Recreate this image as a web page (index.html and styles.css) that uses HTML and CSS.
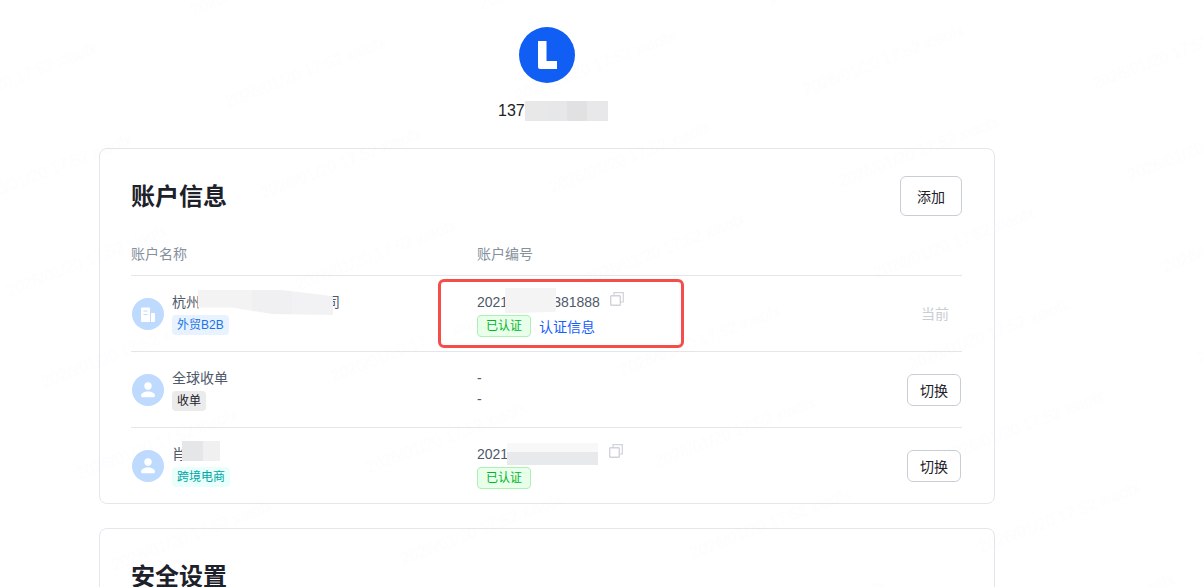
FILE: index.html
```html
<!DOCTYPE html>
<html lang="zh-CN">
<head>
<meta charset="utf-8">
<title>账户信息</title>
<link rel="stylesheet" href="styles.css">
</head>
<body>
<main class="page">
  <header class="profile">
    <div class="avatar">
      <svg width="56" height="56" viewBox="0 0 56 56"><circle cx="28" cy="28" r="28" fill="#115ef5"/><path d="M19 14h8.500v20H38v8H21a2 2 0 0 1-2-2z" fill="#fff"/></svg>
    </div>
    <div class="phone">137<span class="mask mask-phone"></span></div>
  </header>

  <section class="card">
    <div class="card-head">
      <h2>账户信息</h2>
      <button class="btn btn-large">添加</button>
    </div>
    <div class="row row-head">
      <div class="col-name">账户名称</div>
      <div class="col-no">账户编号</div>
    </div>
    <div class="row">
      <div class="col-name account">
        <svg class="icon" viewBox="0 0 32 32"><circle cx="16" cy="16" r="16" fill="#bedaff"/><path d="M9 10.500a1 1 0 0 1 1-1h7a1 1 0 0 1 1 1V24H10a1 1 0 0 1-1-1z" fill="#fff"/><path d="M19 15h3a1 1 0 0 1 1 1v7a1 1 0 0 1-1 1h-3z" fill="#fff"/><path d="M11.500 13h4M11.500 16.500h4" stroke="#bedaff" stroke-width="1.200"/></svg>
        <div class="meta">
          <div class="name">杭州<span class="mask mask-company"></span>司</div>
          <span class="tag tag-blue">外贸B2B</span>
        </div>
      </div>
      <div class="col-no">
        <div class="number">2021<span class="mask mask-no1"></span>381888<svg class="copy" viewBox="0 0 14 14"><path d="M4 3V.7h9.300V10H11" fill="none" stroke="#d0d3d9" stroke-width="1.200"/><rect x=".7" y="3.700" width="9.600" height="9.600" rx=".8" fill="none" stroke="#d0d3d9" stroke-width="1.400"/></svg></div>
        <div class="status"><span class="tag tag-green">已认证</span><a class="link">认证信息</a></div>
      </div>
      <div class="col-action"><span class="current">当前</span></div>
    </div>
    <div class="row">
      <div class="col-name account">
        <svg class="icon" viewBox="0 0 32 32"><circle cx="16" cy="16" r="16" fill="#bedaff"/><circle cx="16" cy="12" r="3.700" fill="#fff"/><path d="M9 21.800c0-2.700 3.200-4.300 7-4.300s7 1.600 7 4.300c0 .9-.6 1.400-1.400 1.400H10.400c-.8 0-1.400-.5-1.400-1.400z" fill="#fff"/></svg>
        <div class="meta">
          <div class="name">全球收单</div>
          <span class="tag tag-gray">收单</span>
        </div>
      </div>
      <div class="col-no">
        <div class="number">-</div>
        <div class="status dash">-</div>
      </div>
      <div class="col-action"><button class="btn">切换</button></div>
    </div>
    <div class="row row-last">
      <div class="col-name account">
        <svg class="icon" viewBox="0 0 32 32"><circle cx="16" cy="16" r="16" fill="#bedaff"/><circle cx="16" cy="12" r="3.700" fill="#fff"/><path d="M9 21.800c0-2.700 3.200-4.300 7-4.300s7 1.600 7 4.300c0 .9-.6 1.400-1.400 1.400H10.400c-.8 0-1.400-.5-1.400-1.400z" fill="#fff"/></svg>
        <div class="meta">
          <div class="name">肖<span class="mask mask-person"></span></div>
          <span class="tag tag-cyan">跨境电商</span>
        </div>
      </div>
      <div class="col-no">
        <div class="number">2021<span class="mask mask-no2"></span><svg class="copy copy-near" viewBox="0 0 14 14"><path d="M4 3V.7h9.300V10H11" fill="none" stroke="#d0d3d9" stroke-width="1.200"/><rect x=".7" y="3.700" width="9.600" height="9.600" rx=".8" fill="none" stroke="#d0d3d9" stroke-width="1.400"/></svg></div>
        <div class="status"><span class="tag tag-green">已认证</span></div>
      </div>
      <div class="col-action"><button class="btn">切换</button></div>
    </div>
  </section>

  <section class="card card-next">
    <div class="card-head"><h2>安全设置</h2></div>
  </section>
</main>

<div class="highlight"></div>

<svg class="watermark" width="1203" height="587" aria-hidden="true">
  <defs>
    <pattern id="wm" width="272" height="98" patternUnits="userSpaceOnUse" patternTransform="translate(210 61) rotate(-21)">
      <text x="0" y="50" class="wm-text">2026/01/20 17:52 xiaofx</text>
    </pattern>
  </defs>
  <rect width="1203" height="587" fill="url(#wm)"/>
</svg>
</body>
</html>
```
FILE: styles.css
```css
* { box-sizing: border-box; }
html, body { margin: 0; height: 587px; overflow: hidden; background: #fff; }
body {
  font-family: "Liberation Sans", "Noto Sans CJK SC", sans-serif;
  font-size: 14px;
  color: #4e5969;
  position: relative;
}
.page { width: 896px; margin-left: 99px; padding-top: 27px; }

.profile { display: flex; flex-direction: column; align-items: center; }
.avatar { width: 56px; height: 56px; }
.avatar svg { display: block; }
.phone {
  margin-top: 17px;
  height: 22px;
  line-height: 22px;
  font-size: 16px;
  color: #1d2129;
  display: flex;
  align-items: center;
  align-self: flex-start;
  margin-left: 399px;
}

.mask { display: inline-block; flex: none; }
.mask-phone {
  width: 83px; height: 20px;
  background: linear-gradient(90deg, #e8e8e8 0 26%, #e6e7e9 26% 50%, #e1e1e1 50% 75%, #e8e8ea 75%);
}

.card {
  margin-top: 26px;
  border: 1px solid #e5e6eb;
  border-radius: 8px;
  padding: 27px 32px 0 31px;
  background: #fff;
}
.card-next { margin-top: 24px; height: 70px; }
.card-head { display: flex; justify-content: space-between; align-items: center; height: 40px; }
.card-head h2 { margin: 2px 0 0; font-size: 24px; font-weight: 700; color: #1d2129; line-height: 40px; }

.btn {
  width: 54px; height: 32px;
  border: 1px solid #c9cdd4;
  border-radius: 6px;
  background: #fff;
  color: #1d2129;
  font: inherit;
  padding: 0;
}
.btn-large { width: 62px; height: 40px; }

.row {
  display: flex;
  height: 76px;
  border-bottom: 1px solid #e5e6eb;
  align-items: center;
}
.row-head { height: 60px; color: #86909c; align-items: flex-start; padding-top: 28px; line-height: 20px; }
.row-last { border-bottom: 0; height: 75px; }
.col-name { width: 346px; flex: none; }
.col-no { width: 400px; flex: none; align-self: flex-start; padding-top: 16px; }
.row-head .col-no { padding-top: 0; }
.col-action { flex: 1; display: flex; justify-content: flex-end; padding-right: 1px; }

.account { display: flex; align-items: center; gap: 8px; }
.icon { width: 32px; height: 32px; margin-left: 1px; flex: none; }
.meta { display: flex; flex-direction: column; align-items: flex-start; gap: 3px; }
.name { height: 20px; line-height: 20px; display: flex; align-items: flex-start; white-space: nowrap; }
.mask-company {
  width: 135px; height: 25px; margin-top: -2px; margin-left: -2px; margin-right: -7px;
  position: relative; z-index: 1;
  background: linear-gradient(90deg, #f3f3f4 0 40%, #f0f0f2 40% 70%, #f2f2f4 70%);
  clip-path: polygon(0 0, 62% 0, 100% 25%, 100% 100%, 55% 96%, 25% 70%, 0 70%);
}
.mask-person {
  width: 38px; height: 20px; margin-left: -4px; margin-top: -3px;
  background: linear-gradient(90deg, #e5e6e8 0 56%, #f0f0f1 56%);
}

.tag {
  display: inline-flex; align-items: center; justify-content: center;
  height: 20px;
  padding: 0 5px;
  border-radius: 4px;
  font-size: 12px;
  line-height: 20px;
}
.tag-blue { background: #e8f3ff; color: #1a73e8; }
.tag-gray { background: #ebebeb; color: #1d2129; }
.tag-cyan { background: #e8fffb; color: #00a6a6; }
.tag-green {
  height: 22px;
  width: 54px;
  padding: 0;
  background: #e8ffea;
  border: 1px solid #aff0b5;
  color: #00b42a;
}

.number { height: 20px; line-height: 20px; display: flex; align-items: flex-start; white-space: nowrap; }
.mask-no1 {
  width: 51px; height: 25px; margin-left: -3px; margin-top: -4px; margin-right: -3px;
  background: #f4f4f5;
  clip-path: polygon(0 0, 100% 0, 100% 95%, 30% 100%, 0 100%);
  position: relative; z-index: 1;
}
.mask-no2 {
  width: 91px; height: 22px; margin-top: -1px; margin-left: -1px; margin-right: 11px;
  background: linear-gradient(180deg, #f8f8f8 0 40%, #e8e9ea 40%);
  position: relative; z-index: 1;
}
.copy { width: 14px; height: 14px; margin-left: 10px; flex: none; }
.copy-near { margin-left: 0; }

.status { display: flex; align-items: center; gap: 8px; margin-top: 3px; height: 22px; }
.link { color: #165dff; }
.dash { height: 20px; line-height: 20px; margin-top: 1px; }

.current { color: #c9cdd4; margin-right: 12px; margin-bottom: 2px; }

.highlight {
  position: absolute;
  left: 438px; top: 279px;
  width: 246px; height: 69px;
  border: 3px solid #f54e4a;
  border-radius: 6px;
}

.watermark { position: absolute; left: 0; top: 0; pointer-events: none; }
.wm-text { font-family: "Liberation Sans", sans-serif; font-size: 16px; fill: rgba(0,0,0,.009); }
```
